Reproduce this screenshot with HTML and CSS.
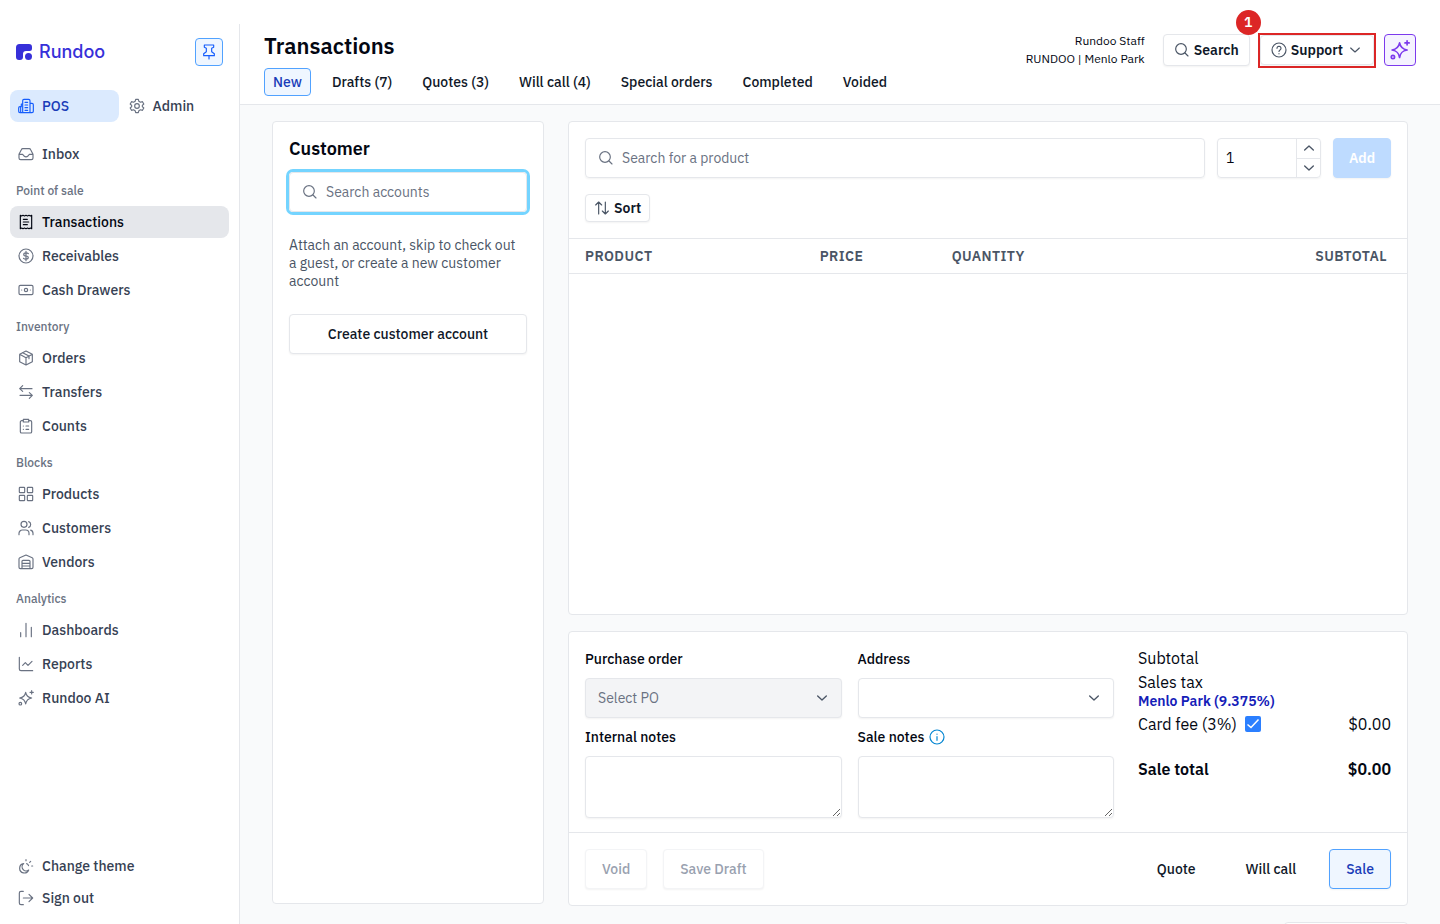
FILE: index.html
```
<!DOCTYPE html>
<html lang="en">
<head>
    <meta charset="UTF-8">
    <meta name="viewport" content="width=device-width, initial-scale=1.0">
    <title>Transactions - Rundoo</title>
    <link rel="stylesheet" href="styles.css">
</head>
<body>
    <svg class="sprite" aria-hidden="true">
        <symbol id="i-search" viewBox="0 0 24 24"><circle cx="10.500" cy="10.500" r="8"/><path d="M16.500 16.500l4.500 4.500"/></symbol>
        <symbol id="i-pin" viewBox="0 0 24 24"><path d="M5 1.500h14v3.500l-3 1.500v5l4 3V17.500H4v-3l4-3v-5L5 5zM12 17.500v5"/></symbol>
        <symbol id="i-pos" viewBox="0 0 24 24"><path d="M7 22V4a2 2 0 0 1 2-2h7a2 2 0 0 1 2 2v18M7 9H5v4H3a2 2 0 0 0-2 2v5a2 2 0 0 0 2 2h18a2 2 0 0 0 2-2V10a2 2 0 0 0-2-2h-3M4 13v9M10.500 6.500h4M10.500 10.500h4M10.500 14.500h4M10.500 18.500h4"/></symbol>
        <symbol id="i-gear" viewBox="0 0 24 24"><path d="M10 2h4l.8 3 2.400 1.400 3-.9 2 3.500-2.200 2.100v1.800l2.200 2.100-2 3.500-3-.9-2.400 1.400-.8 3h-4l-.8-3-2.400-1.400-3 .9-2-3.500L4 12.900v-1.800L1.800 9l2-3.500 3 .9L9.200 5z"/><circle cx="12" cy="12" r="3.500"/></symbol>
        <symbol id="i-inbox" viewBox="0 0 24 24"><path d="M1.500 12.500L5 5.500A2.500 2.500 0 0 1 7.200 4h9.600A2.500 2.500 0 0 1 19 5.500l3.500 7V18a2.500 2.500 0 0 1-2.500 2.500H4A2.500 2.500 0 0 1 1.500 18zH7l2 2.500q3 2.500 6 0l2-2.500h5.500"/></symbol>
        <symbol id="i-receipt" viewBox="0 0 24 24"><path d="M3.500 2l2 1 2-1 2.200 1L12 2l2.300 1 2.200-1 2 1 2-1v20l-2-1-2 1-2.200-1-2.300 1-2.300-1-2.200 1-2-1-2 1zM8 8h6M8 12h8M8 16h6"/></symbol>
        <symbol id="i-dollar" viewBox="0 0 24 24"><circle cx="12" cy="12" r="10.500"/><path d="M15.500 8.500q-1-1.200-3.500-1.200c-4.500 0-4.500 4.700 0 4.700s4.500 4.800 0 4.800q-2.500 0-3.700-1.400M12 5v14"/></symbol>
        <symbol id="i-cash" viewBox="0 0 24 24"><rect x="1.500" y="5" width="21" height="14" rx="2"/><circle cx="12" cy="12" r="2.500"/><path d="M5.500 12h.1M18.500 12h.1"/></symbol>
        <symbol id="i-box" viewBox="0 0 24 24"><path d="M12 1.500l9.500 5v11l-9.500 5-9.500-5v-11zM2.500 6.500l9.500 5 9.500-5M12 11.500v11M7 4l9.500 5v4"/></symbol>
        <symbol id="i-transfer" viewBox="0 0 24 24"><path d="M21 7H3M7 2.500L2.500 7 7 11M3 17h18M17 13l4.500 4-4.500 4.500"/></symbol>
        <symbol id="i-clipboard" viewBox="0 0 24 24"><path d="M8 4H5.500a2 2 0 0 0-2 2v14.500a2 2 0 0 0 2 2h13a2 2 0 0 0 2-2V6a2 2 0 0 0-2-2H16M8 2h8v4H8zM8 12h.1M12 12h4M8 17h.1M12 17h4"/></symbol>
        <symbol id="i-grid" viewBox="0 0 24 24"><rect x="2" y="2" width="8" height="8" rx="1"/><rect x="14" y="2" width="8" height="8" rx="1"/><rect x="2" y="14" width="8" height="8" rx="1"/><rect x="14" y="14" width="8" height="8" rx="1"/></symbol>
        <symbol id="i-users" viewBox="0 0 24 24"><circle cx="9" cy="6.500" r="4.500"/><path d="M1.500 22v-2a5 5 0 0 1 5-5h5a5 5 0 0 1 5 5v2M16 2.500a4.500 4.500 0 0 1 0 8.500M19 15.200a5 5 0 0 1 3.500 4.800v2"/></symbol>
        <symbol id="i-warehouse" viewBox="0 0 24 24"><path d="M1.500 20V7.500a2 2 0 0 1 1.200-1.800L12 1.500l9.300 4.200a2 2 0 0 1 1.200 1.800V20a2 2 0 0 1-2 2h-17a2 2 0 0 1-2-2zM6 22V11a1.500 1.500 0 0 1 1.500-1.500h9A1.500 1.500 0 0 1 18 11v11M6 14h12M6 18h12"/></symbol>
        <symbol id="i-bars" viewBox="0 0 24 24"><path d="M4 16v6M12 2v20M20 8v14"/></symbol>
        <symbol id="i-line" viewBox="0 0 24 24"><path d="M2 2v17.500A2.500 2.500 0 0 0 4.500 22H22M7 14l4-4 4 4 6-6"/></symbol>
        <symbol id="i-sparkle" viewBox="0 0 24 24"><path d="M11.500 3.500c1 5.300 3.200 7.500 9 8.500-5.800 1-8 3.200-9 9-1-5.800-3.200-8-9-9 5.800-1 8-3.200 9-8.500zM20.500 1v5M18 3.500h5"/><circle cx="3.500" cy="20.500" r="2"/></symbol>
        <symbol id="i-theme" viewBox="0 0 24 24"><path d="M8.500 8.500a7 7 0 1 0 7.500 9.500 5.800 5.800 0 0 1-7.500-9.500zM12 2.500v1.500M17.500 6.500l1.500-1.500M20.500 12H22M13 8.500a4.500 4.500 0 0 1 2.800 3"/></symbol>
        <symbol id="i-signout" viewBox="0 0 24 24"><path d="M8 2H4.500A2.500 2.500 0 0 0 2 4.500v15A2.500 2.500 0 0 0 4.500 22H8M8 12h14M16.500 6.500L22 12l-5.500 5.500"/></symbol>
        <symbol id="i-help" viewBox="0 0 24 24"><circle cx="12" cy="12" r="10.500"/><path d="M9 9.500a3 3 0 1 1 4.500 2.600q-1.500.9-1.500 2.200M12 17.500v.2"/></symbol>
        <symbol id="i-info" viewBox="0 0 24 24"><circle cx="12" cy="12" r="10.500"/><path d="M12 11.500v5.500M12 7.500v.2"/></symbol>
        <symbol id="i-down" viewBox="0 0 24 24"><path d="M5.500 9l6.500 6 6.500-6"/></symbol>
        <symbol id="i-up" viewBox="0 0 24 24"><path d="M5.500 15l6.500-6 6.500 6"/></symbol>
        <symbol id="i-sort" viewBox="0 0 24 24"><path d="M7 21V3M2.500 7.500L7 3l4.500 4.500M17 3v18M12.500 16.500L17 21l4.500-4.500"/></symbol>
    </svg>

    <div class="app">
        <aside class="sidebar">
            <div class="brand">
                <a href="#" class="logo">
                    <svg class="logo-mark" viewBox="0 0 16 16"><path d="M3.500 0H13a3 3 0 0 1 3 3v1.500a2.500 2.500 0 0 1-2.500 2.500H10A3 3 0 0 0 7 10v3a3 3 0 0 1-3 3H3a3 3 0 0 1-3-3V3.500A3.500 3.500 0 0 1 3.500 0z"/><circle cx="12.500" cy="12.500" r="3.500"/></svg>
                    <span>Rundoo</span>
                </a>
                <button type="button" class="pin" aria-label="Pin sidebar"><svg class="icon"><use href="#i-pin"/></svg></button>
            </div>

            <div class="modes">
                <a href="#" class="nav-link mode active"><svg class="icon"><use href="#i-pos"/></svg>POS</a>
                <a href="#" class="nav-link mode"><svg class="icon"><use href="#i-gear"/></svg>Admin</a>
            </div>

            <nav class="nav">
                <a href="#" class="nav-link"><svg class="icon"><use href="#i-inbox"/></svg>Inbox</a>
                <div class="nav-title">Point of sale</div>
                <a href="#" class="nav-link current"><svg class="icon"><use href="#i-receipt"/></svg>Transactions</a>
                <a href="#" class="nav-link"><svg class="icon"><use href="#i-dollar"/></svg>Receivables</a>
                <a href="#" class="nav-link"><svg class="icon"><use href="#i-cash"/></svg>Cash Drawers</a>
                <div class="nav-title">Inventory</div>
                <a href="#" class="nav-link"><svg class="icon"><use href="#i-box"/></svg>Orders</a>
                <a href="#" class="nav-link"><svg class="icon"><use href="#i-transfer"/></svg>Transfers</a>
                <a href="#" class="nav-link"><svg class="icon"><use href="#i-clipboard"/></svg>Counts</a>
                <div class="nav-title">Blocks</div>
                <a href="#" class="nav-link"><svg class="icon"><use href="#i-grid"/></svg>Products</a>
                <a href="#" class="nav-link"><svg class="icon"><use href="#i-users"/></svg>Customers</a>
                <a href="#" class="nav-link"><svg class="icon"><use href="#i-warehouse"/></svg>Vendors</a>
                <div class="nav-title">Analytics</div>
                <a href="#" class="nav-link"><svg class="icon"><use href="#i-bars"/></svg>Dashboards</a>
                <a href="#" class="nav-link"><svg class="icon"><use href="#i-line"/></svg>Reports</a>
                <a href="#" class="nav-link"><svg class="icon"><use href="#i-sparkle"/></svg>Rundoo AI</a>
            </nav>

            <div class="nav-bottom">
                <a href="#" class="nav-link"><svg class="icon"><use href="#i-theme"/></svg>Change theme</a>
                <a href="#" class="nav-link"><svg class="icon"><use href="#i-signout"/></svg>Sign out</a>
            </div>
        </aside>

        <div class="page">
            <header class="header">
                <div class="header-main">
                    <h1>Transactions</h1>
                    <nav class="tabs">
                        <a href="#" class="tab active">New</a>
                        <a href="#" class="tab">Drafts (7)</a>
                        <a href="#" class="tab">Quotes (3)</a>
                        <a href="#" class="tab">Will call (4)</a>
                        <a href="#" class="tab">Special orders</a>
                        <a href="#" class="tab">Completed</a>
                        <a href="#" class="tab">Voided</a>
                    </nav>
                </div>
                <div class="header-tools">
                    <div class="user">
                        <div>Rundoo Staff</div>
                        <div>RUNDOO | Menlo Park</div>
                    </div>
                    <button type="button" class="btn btn-tool"><svg class="icon"><use href="#i-search"/></svg>Search</button>
                    <div class="callout">
                        <button type="button" class="btn btn-tool"><svg class="icon"><use href="#i-help"/></svg>Support<svg class="icon"><use href="#i-down"/></svg></button>
                        <span class="callout-number">1</span>
                    </div>
                    <button type="button" class="btn-ai" aria-label="Rundoo AI"><svg class="icon"><use href="#i-sparkle"/></svg></button>
                </div>
            </header>

            <main class="content">
                <section class="card customer">
                    <h2>Customer</h2>
                    <label class="search focused">
                        <svg class="icon"><use href="#i-search"/></svg>
                        <input type="text" placeholder="Search accounts" aria-label="Search accounts">
                    </label>
                    <p>Attach an account, skip to check out a guest, or create a new customer account</p>
                    <button type="button" class="btn">Create customer account</button>
                </section>

                <div class="sale">
                    <section class="card products">
                        <div class="product-bar">
                            <label class="search">
                                <svg class="icon"><use href="#i-search"/></svg>
                                <input type="text" placeholder="Search for a product" aria-label="Search for a product">
                            </label>
                            <div class="quantity">
                                <input type="text" value="1" aria-label="Quantity">
                                <div class="steps">
                                    <button type="button" aria-label="Increase"><svg class="icon"><use href="#i-up"/></svg></button>
                                    <button type="button" aria-label="Decrease"><svg class="icon"><use href="#i-down"/></svg></button>
                                </div>
                            </div>
                            <button type="button" class="btn btn-add" disabled>Add</button>
                        </div>
                        <button type="button" class="btn btn-sort"><svg class="icon"><use href="#i-sort"/></svg>Sort</button>
                        <table class="lines">
                            <thead>
                                <tr>
                                    <th class="col-product">Product</th>
                                    <th class="col-price">Price</th>
                                    <th>Quantity</th>
                                    <th class="col-subtotal">Subtotal</th>
                                </tr>
                            </thead>
                        </table>
                    </section>

                    <section class="card checkout">
                        <div class="details">
                            <div class="fields">
                                <div class="field">
                                    <label for="po">Purchase order</label>
                                    <div class="select">
                                        <select id="po" disabled><option>Select PO</option></select>
                                        <svg class="icon"><use href="#i-down"/></svg>
                                    </div>
                                </div>
                                <div class="field">
                                    <label for="address">Address</label>
                                    <div class="select">
                                        <select id="address"><option></option></select>
                                        <svg class="icon"><use href="#i-down"/></svg>
                                    </div>
                                </div>
                                <div class="field">
                                    <label for="internalNotes">Internal notes</label>
                                    <textarea id="internalNotes"></textarea>
                                </div>
                                <div class="field">
                                    <label for="saleNotes">Sale notes <svg class="icon info"><use href="#i-info"/></svg></label>
                                    <textarea id="saleNotes"></textarea>
                                </div>
                            </div>
                            <div class="summary">
                                <div class="summary-row">Subtotal</div>
                                <div>
                                    <div class="summary-row">Sales tax</div>
                                    <a href="#" class="tax">Menlo Park (9.375%)</a>
                                </div>
                                <div class="summary-row">
                                    <label class="fee">Card fee (3%) <input type="checkbox" checked></label>
                                    <span>$0.00</span>
                                </div>
                                <div class="summary-row total"><span>Sale total</span><span>$0.00</span></div>
                            </div>
                        </div>
                        <div class="actions">
                            <button type="button" class="btn" disabled>Void</button>
                            <button type="button" class="btn" disabled>Save Draft</button>
                            <div class="spacer"></div>
                            <button type="button" class="btn btn-plain">Quote</button>
                            <button type="button" class="btn btn-plain">Will call</button>
                            <button type="button" class="btn btn-primary">Sale</button>
                        </div>
                    </section>

                    <div class="card more"></div>
                </div>
            </main>
        </div>
    </div>
</body>
</html>
```
FILE: styles.css
```
* {
    box-sizing: border-box;
}
body {
    margin: 0;
    font-family: "IBM Plex Sans", Roboto, sans-serif;
    font-size: 14px;
    line-height: 18px;
    color: #030712;
    background-color: #fff;
}
h1, h2, p {
    margin: 0;
}
a {
    color: inherit;
    text-decoration: none;
}
button, input, select, textarea {
    font: inherit;
    color: inherit;
}
button {
    cursor: pointer;
}
.sprite {
    display: none;
}
.icon {
    width: 16px;
    height: 16px;
    flex: none;
    fill: none;
    stroke: currentColor;
    stroke-width: 1.75;
    stroke-linecap: round;
    stroke-linejoin: round;
}
.app {
    display: flex;
    height: 100vh;
    padding-top: 24px;
    overflow: hidden;
}

/* Sidebar */
.sidebar {
    display: flex;
    flex-direction: column;
    width: 240px;
    flex: none;
    padding: 14px 10px 10px;
    border-right: 1px solid #e5e7eb;
}
.brand {
    display: flex;
    align-items: center;
    justify-content: space-between;
    padding: 0 6px;
    margin-bottom: 24px;
}
.logo {
    display: flex;
    align-items: center;
    gap: 7px;
    font-family: Inter, sans-serif;
    font-size: 18px;
    font-weight: 500;
    color: #3730d9;
}
.logo-mark {
    width: 16px;
    height: 16px;
    fill: #3730d9;
}
.pin {
    display: flex;
    align-items: center;
    justify-content: center;
    width: 28px;
    height: 28px;
    padding: 0;
    color: #155dfc;
    background-color: #eff6ff;
    border: 1px solid #51a2ff;
    border-radius: 4px;
}
.modes {
    display: grid;
    grid-template-columns: 1fr 1fr;
    gap: 2px;
    margin-bottom: 16px;
}
.nav {
    display: flex;
    flex-direction: column;
    gap: 2px;
}
.nav-link {
    display: flex;
    align-items: center;
    gap: 8px;
    height: 32px;
    padding: 0 8px;
    font-weight: 500;
    color: #364153;
    border-radius: 8px;
}
.nav-link .icon {
    color: #6a7282;
}
.nav-link.active {
    color: #193cb8;
    background-color: #dbeafe;
}
.nav-link.active .icon {
    color: #155dfc;
}
.nav-link.current {
    color: #030712;
    background-color: #e5e7eb;
}
.nav-link.current .icon {
    color: #030712;
}
.nav-title {
    height: 32px;
    padding: 10px 6px 4px;
    font-size: 12px;
    font-weight: 500;
    color: #6a7282;
}
.nav-bottom {
    margin-top: auto;
}

/* Header */
.page {
    display: flex;
    flex-direction: column;
    flex: 1;
    min-width: 0;
}
.header {
    display: flex;
    justify-content: space-between;
    flex: none;
    padding: 8px 24px;
    border-bottom: 1px solid #e5e7eb;
}
h1 {
    margin-bottom: 8px;
    font-size: 22px;
    line-height: 28px;
    font-weight: 600;
}
.tabs {
    display: flex;
    gap: 12px;
}
.tab {
    padding: 4px 8px;
    font-weight: 500;
    color: #101828;
    border: 1px solid transparent;
    border-radius: 4px;
}
.tab.active {
    color: #193cb8;
    background-color: #eff6ff;
    border-color: #51a2ff;
}
.header-tools {
    display: flex;
    align-items: flex-start;
    gap: 8px;
}
.user {
    margin-right: 10px;
    font-size: 12px;
    text-align: right;
}
.header-tools > .btn, .btn-ai {
    margin-top: 2px;
}
.btn {
    display: flex;
    align-items: center;
    justify-content: center;
    height: 40px;
    padding: 0 16px;
    font-weight: 500;
    color: #101828;
    background-color: #fff;
    border: 1px solid #e5e7eb;
    border-radius: 4px;
    box-shadow: 0 1px 2px rgba(0, 0, 0, 0.05);
}
.btn .icon {
    color: #4a5565;
}
.btn-tool {
    gap: 4px;
    height: 32px;
    padding: 0 10px;
    font-weight: 600;
}
.callout {
    position: relative;
    padding-bottom: 1px;
    margin-top: 1px;
    border: 2px solid #dc2626;
}
.callout .btn {
    height: 30px;
}
.callout-number {
    position: absolute;
    top: -25px;
    left: -24px;
    width: 25px;
    height: 25px;
    line-height: 24px;
    font-weight: 600;
    text-align: center;
    color: #fff;
    background-color: #dc2626;
    border-radius: 50%;
}
.btn-ai {
    display: flex;
    align-items: center;
    justify-content: center;
    width: 32px;
    height: 32px;
    padding: 0;
    color: #7c3aed;
    background-color: #f5f3ff;
    border: 1px solid #7c3aed;
    border-radius: 4px;
}
.btn-ai .icon {
    width: 20px;
    height: 20px;
    stroke-width: 2;
}

/* Content */
.content {
    display: flex;
    align-items: flex-start;
    gap: 24px;
    flex: 1;
    min-height: 0;
    padding: 16px 32px 20px;
    overflow: hidden;
    background-color: #f9fafb;
}
.card {
    background-color: #fff;
    border: 1px solid #e5e7eb;
    border-radius: 4px;
}
.customer {
    width: 272px;
    height: 100%;
    flex: none;
    padding: 16px;
}
h2 {
    margin-bottom: 12px;
    font-size: 18px;
    line-height: 22px;
    font-weight: 600;
}
.customer p {
    padding-right: 4px;
    margin: 24px 0;
    color: #4a5565;
}
.customer .btn {
    width: 100%;
}
.search {
    display: flex;
    align-items: center;
    gap: 8px;
    flex: 1;
    height: 40px;
    padding: 0 12px;
    border: 1px solid #e5e7eb;
    border-radius: 4px;
    box-shadow: 0 1px 2px rgba(0, 0, 0, 0.05);
}
.search.focused {
    box-shadow: 0 0 0 3px #74d4ff;
}
.search .icon {
    color: #6a7282;
}
.search input {
    width: 100%;
    min-width: 0;
    padding: 0;
    border: none;
    outline: none;
    background: none;
}
.search input::placeholder {
    color: #6a7282;
}
.sale {
    display: flex;
    flex-direction: column;
    flex: 1;
    gap: 16px;
    min-width: 0;
}
.products {
    min-height: 494px;
}
.product-bar {
    display: flex;
    gap: 12px;
    padding: 16px;
}
.quantity {
    display: flex;
    width: 104px;
    height: 40px;
    border: 1px solid #e5e7eb;
    border-radius: 4px;
    box-shadow: 0 1px 2px rgba(0, 0, 0, 0.05);
}
.quantity input {
    flex: 1;
    min-width: 0;
    padding: 0 8px;
    border: none;
    background: none;
}
.steps {
    display: flex;
    flex-direction: column;
    width: 24px;
    border-left: 1px solid #e5e7eb;
}
.steps button {
    display: flex;
    align-items: center;
    justify-content: center;
    flex: 1;
    padding: 0;
    color: #4a5565;
    background: none;
    border: none;
}
.steps button + button {
    border-top: 1px solid #e5e7eb;
}
.steps .icon, .select .icon {
    stroke-width: 2;
}
.btn-add {
    width: 58px;
    font-weight: 600;
    background-color: #bedbff;
}
.btn-sort {
    gap: 4px;
    height: 28px;
    padding: 0 8px;
    margin: 0 16px 16px;
    font-weight: 600;
}
.lines {
    width: 100%;
    border-collapse: collapse;
}
.lines th {
    height: 35px;
    padding: 0 16px;
    font-weight: 600;
    letter-spacing: 0.03em;
    text-align: left;
    text-transform: uppercase;
    color: #4a5565;
    border-top: 1px solid #e5e7eb;
    border-bottom: 1px solid #e5e7eb;
}
.lines .col-product {
    width: 28%;
}
.lines .col-price {
    width: 132px;
}
.lines .col-subtotal {
    padding-right: 20px;
    text-align: right;
}

/* Checkout */
.details {
    display: flex;
    gap: 24px;
    padding: 16px 16px 14px;
}
.fields {
    display: grid;
    grid-template-columns: 1fr 1fr;
    gap: 8px 16px;
    flex: 1;
}
.field label {
    display: flex;
    align-items: center;
    gap: 5px;
    margin-bottom: 8px;
    line-height: 22px;
    font-weight: 500;
}
.info {
    color: #0084d1;
}
.select {
    display: grid;
    align-items: center;
}
.select > * {
    grid-area: 1 / 1;
}
.select .icon {
    justify-self: end;
    margin-right: 12px;
    color: #4a5565;
    pointer-events: none;
}
select, textarea {
    display: block;
    width: 100%;
    background-color: #fff;
    border: 1px solid #e5e7eb;
    border-radius: 4px;
    box-shadow: 0 1px 2px rgba(0, 0, 0, 0.05);
}
select {
    height: 40px;
    padding: 0 12px;
    appearance: none;
}
select:disabled {
    color: #6a7282;
    background-color: #f3f4f6;
    opacity: 1;
}
textarea {
    height: 62px;
    padding: 8px 12px;
    resize: vertical;
}
.summary {
    display: flex;
    flex-direction: column;
    gap: 4px;
    width: 253px;
}
.summary-row {
    display: flex;
    justify-content: space-between;
    font-size: 16px;
    line-height: 20px;
}
.tax {
    display: block;
    font-weight: 600;
    color: #1420b8;
}
.fee {
    display: flex;
    align-items: center;
    gap: 8px;
}
.fee input {
    width: 16px;
    height: 16px;
    margin: 0;
    appearance: none;
    border-radius: 2px;
    background: #2b7fff url("data:image/svg+xml,%3Csvg xmlns='http://www.w3.org/2000/svg' viewBox='0 0 16 16' fill='none' stroke='white' stroke-width='1.500'%3E%3Cpath d='M2.500 8.500l3.500 3 7.500-8'/%3E%3C/svg%3E");
}
.total {
    margin-top: 21px;
    font-weight: 600;
}
.actions {
    display: flex;
    gap: 16px;
    padding: 16px;
    border-top: 1px solid #e5e7eb;
}
.btn:disabled {
    color: #99a1af;
    border-color: #f3f4f6;
}
.btn-add:disabled {
    color: #fff;
    border-color: #bedbff;
}
.spacer {
    flex: 1;
}
.btn-plain {
    border-color: transparent;
    box-shadow: none;
}
.btn-primary {
    color: #193cb8;
    background-color: #eff6ff;
    border-color: #51a2ff;
}
.more {
    align-self: flex-end;
    width: 124px;
    height: 40px;
}
```
